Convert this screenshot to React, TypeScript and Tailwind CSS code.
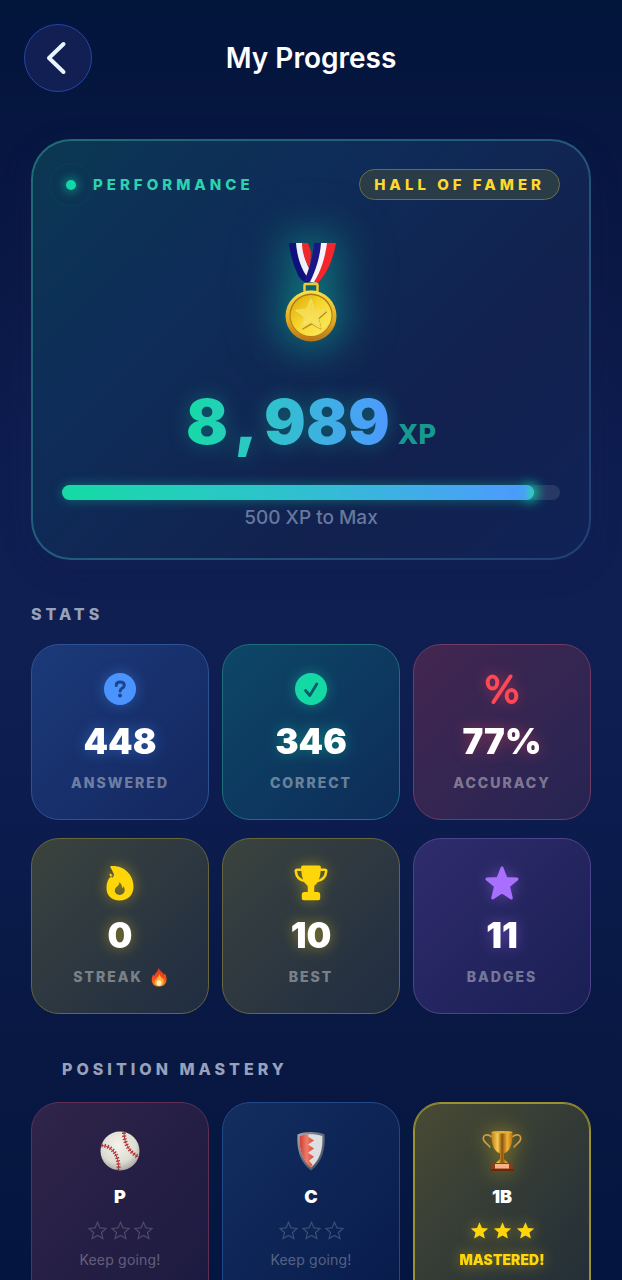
import clsx from "clsx";
import type { ReactNode } from "react";

const STAR_PATH =
  "M12 1.5l3.1 7.2 7.9.7-6 5.2 1.8 7.6-6.8-4-6.8 4L7 14.6 1 9.4l7.9-.7z";

function MedalArt() {
  return (
    <svg
      aria-hidden="true"
      viewBox="0 0 52 100"
      className="h-[100px] w-[52px] [filter:drop-shadow(0_0_20px_rgba(16,216,168,0.5))_drop-shadow(0_0_28px_rgba(16,216,168,0.25))]"
    >
      <defs>
        <linearGradient id="medal-rim" x1="0" y1="0" x2="0" y2="1">
          <stop offset="0" stopColor="#fbe04a" />
          <stop offset="0.6" stopColor="#e0a81c" />
          <stop offset="1" stopColor="#b8741a" />
        </linearGradient>
        <linearGradient id="medal-face" x1="0" y1="0" x2="1" y2="1">
          <stop offset="0" stopColor="#d9a708" />
          <stop offset="0.45" stopColor="#f6d52c" />
          <stop offset="0.8" stopColor="#fbe552" />
          <stop offset="1" stopColor="#d39d10" />
        </linearGradient>
        <linearGradient id="medal-star" x1="0" y1="0" x2="0" y2="1">
          <stop offset="0" stopColor="#f3d53a" />
          <stop offset="1" stopColor="#fae666" />
        </linearGradient>
      </defs>
      <path d="M4 1h7c2 14 6 27 14 36l-2 4c-5-1-8-4-10-8C8 22 5 12 4 1z" fill="#10107c" />
      <path d="M11 1h7c0 10 3 21 8 29l-2 7C16 28 12 14 11 1z" fill="#f1f1f5" />
      <path d="M17 1h6l3 9-1 17c-5-8-8-17-8-26z" fill="#f0282d" />
      <path d="M29 1h9c-1 13-5 28-10 39l-9-1c5-11 9-24 10-38z" fill="#1a1688" />
      <path d="M36 1h8c-2 15-7 29-12 40l-7-1c6-12 10-25 11-39z" fill="#f5f5f8" />
      <path d="M42 1h9c-3 17-9 30-18 40l-4-1c7-11 11-24 13-39z" fill="#f3262c" />
      <rect x="19.5" y="42" width="13" height="8" rx="1" fill="none" stroke="#efcb2d" strokeWidth="2.5" />
      <circle cx="26" cy="74" r="25.5" fill="url(#medal-rim)" />
      <circle cx="26" cy="73" r="21.5" fill="#a97713" />
      <circle cx="26" cy="73.5" r="20.5" fill="url(#medal-face)" />
      <path
        d="M26.800 60l4 9.200 10 .9-7.600 6.600 2.300 9.800-8.700-5.200-8.700 5.200 2.300-9.800-7.600-6.600 10-.9z"
        fill="#b98a12"
        stroke="#b98a12"
        strokeWidth="2"
        strokeLinejoin="round"
      />
      <path
        d="M26 58l4.200 9.600 10.500.9-8 6.900 2.400 10.300-9.100-5.500-9.100 5.500 2.400-10.300-8-6.900 10.500-.9z"
        fill="url(#medal-star)"
        stroke="#f3da58"
        strokeWidth="2"
        strokeLinejoin="round"
      />
    </svg>
  );
}

function QuestionIcon() {
  return (
    <svg aria-hidden="true" viewBox="0 0 32 32" className="size-8">
      <circle cx="16" cy="16" r="16" fill="#4b94ff" />
      <path
        d="M12.2 12.6c0-2.4 1.6-3.6 4-3.6 2.300 0 4.100 1.200 4.100 3.200 0 1.600-.9 2.300-2.200 3.100-1.300.8-1.900 1.300-1.900 2.600"
        fill="none"
        stroke="#1c458c"
        strokeWidth="3"
        strokeLinecap="round"
      />
      <circle cx="16" cy="22.600" r="2" fill="#1c458c" />
    </svg>
  );
}

function CheckIcon() {
  return (
    <svg aria-hidden="true" viewBox="0 0 32 32" className="size-8">
      <circle cx="16" cy="16" r="16" fill="#14d9a5" />
      <path
        d="M10.500 17.500l4.300 5 7-11.500"
        fill="none"
        stroke="#0b5a68"
        strokeWidth="2.800"
        strokeLinecap="round"
        strokeLinejoin="round"
      />
    </svg>
  );
}

function PercentIcon() {
  return (
    <svg
      aria-hidden="true"
      viewBox="0 0 34 32"
      className="h-8 w-[34px]"
      fill="none"
      stroke="#ff4757"
      strokeLinecap="round"
      strokeWidth="4"
    >
      <ellipse cx="7.500" cy="9.500" rx="4.800" ry="6" />
      <ellipse cx="26.500" cy="23" rx="4.800" ry="6" />
      <path d="M25.500 3.500l-17 25.500" />
    </svg>
  );
}

function FlameIcon() {
  return (
    <svg aria-hidden="true" viewBox="0 0 28 35" className="h-[35px] w-7">
      <path
        fill="#ffd60a"
        fillRule="evenodd"
        d="M4.600 1.800C4 .8 4.500.2 5.600.1 17-.7 27.500 8 27.500 20.500c0 8.600-5.500 14-14 14C5.500 34.500.5 29.600.5 22c0-5 1.400-8.800 4.900-12.600.4.900.6 1.900.8 2.700.9-.9 1.600-1.900 2-3C7.500 6.800 6 4.300 4.600 1.800zM3.500 7.500c1.400.4 2.300 1 3 1.900L4.500 12c-.4-1.500-.7-3-1-4.500zM13.300 16.200c-.1 2.300-1 3.400-2.200 4.300-1 .8-2.300 2.200-2.300 4 0 2.700 2.300 4.400 5 4.400s4.900-1.900 4.900-4.800c0-1.600-.6-2.900-1.400-3.800-.3 1-.7 1.500-1.300 1.900.2-2.700-.7-4.800-2.700-6z"
      />
    </svg>
  );
}

function TrophyIcon() {
  return (
    <svg aria-hidden="true" viewBox="0 0 34 36" className="h-9 w-[34px]">
      <path
        d="M8.500 4.800H3.200c-1 0-1.500.6-1.400 1.500.5 5.500 4.200 9.200 10 10M25.500 4.800h5.300c1 0 1.500.6 1.400 1.500-.5 5.500-4.200 9.200-10 10"
        fill="none"
        stroke="#ffd60a"
        strokeWidth="2.600"
      />
      <path
        d="M9 .5h16c1.300 0 2 .7 1.900 2-.4 8-1.600 13.400-4.700 16.600-1.300 1.300-2 1.800-2 3.200V27h3.300c1.700 0 2.700 1 2.700 2.700v3.500c0 1.300-.7 2-2 2H9.800c-1.300 0-2-.7-2-2v-3.500c0-1.700 1-2.700 2.700-2.700h3.300v-4.700c0-1.400-.7-1.900-2-3.200C8.700 15.900 7.500 10.500 7.100 2.500 7 1.200 7.700.5 9 .5z"
        fill="#ffd60a"
      />
    </svg>
  );
}

function BadgeStarIcon() {
  return (
    <svg aria-hidden="true" viewBox="0 0 36 36" className="size-9">
      <path
        d="M18 3l4 10.500 11 .5-8.600 7.200L27.300 33 18 26.800 8.700 33l2.900-11.800L3 14l11-.5z"
        fill="#a970ff"
        stroke="#a970ff"
        strokeWidth="3"
        strokeLinejoin="round"
      />
    </svg>
  );
}

function FireEmoji() {
  return (
    <svg role="img" aria-label="fire" viewBox="0 0 16 20" className="h-5 w-4">
      <defs>
        <linearGradient id="fire-outer" x1="0" y1="0" x2="0" y2="1">
          <stop offset="0" stopColor="#d63a18" />
          <stop offset="0.6" stopColor="#f4511e" />
          <stop offset="1" stopColor="#ff8a1e" />
        </linearGradient>
      </defs>
      <path
        d="M7.500 1C9 4 12 5 13 8c.5-.6.6-1.200.6-2 2 3 2.400 6 1.700 8.500C14.500 17.500 12 19.500 8 19.500S1.500 17.500.9 14.500C.4 12 1 9 2.500 7c0 1 .3 1.700.9 2.200C3.500 6 7 5 7.500 1z"
        fill="url(#fire-outer)"
      />
      <path
        d="M8.200 7c.4 2 2.400 3 2.900 5 .4-.3.6-.6.8-1 1 2 1 4 .2 5.500-.8 1.600-2.200 2.400-4.100 2.400s-3.500-1-4.100-2.600C3.400 14.800 3.600 13 4.500 12c.1.600.4 1 .8 1.200C5.300 11 8 10 8.200 7z"
        fill="#ffb13b"
      />
      <ellipse cx="8" cy="16" rx="2.400" ry="2.800" fill="#fff0ba" />
    </svg>
  );
}

function BaseballArt() {
  return (
    <svg aria-hidden="true" viewBox="0 0 40 40" className="size-10">
      <defs>
        <radialGradient id="ball" cx="0.45" cy="0.35" r="0.65">
          <stop offset="0" stopColor="#f4f2ea" />
          <stop offset="0.7" stopColor="#dddcd2" />
          <stop offset="1" stopColor="#a9aaa5" />
        </radialGradient>
      </defs>
      <circle cx="20" cy="20" r="19.500" fill="url(#ball)" />
      <g fill="none" stroke="#b5353a">
        <path d="M1 14.500c10 0 18.500 9 17.500 24.500M24 1c0 11 5 20 14.500 25" strokeWidth="1" />
        <path
          d="M1.500 14.500c10 0 18 9 17 24.500M24 1.500c0 10.500 5 19.500 14.500 24.500"
          strokeWidth="4"
          strokeDasharray="1.300 1.700"
        />
      </g>
    </svg>
  );
}

function ShieldArt() {
  return (
    <svg aria-hidden="true" viewBox="0 0 30 40" className="h-10 w-[30px]">
      <defs>
        <linearGradient id="shield-rim" x1="0" y1="0" x2="1" y2="1">
          <stop offset="0" stopColor="#a9adb5" />
          <stop offset="0.4" stopColor="#71767f" />
          <stop offset="1" stopColor="#454b57" />
        </linearGradient>
        <linearGradient id="shield-red" x1="0" y1="0" x2="1" y2="0">
          <stop offset="0" stopColor="#c83f35" />
          <stop offset="0.5" stopColor="#f07b66" />
          <stop offset="1" stopColor="#d94a3a" />
        </linearGradient>
      </defs>
      <path d="M1.500 3.500C10 .3 20 .3 28.500 3.500 29.500 19 26 31 15 39.500 4 31 .5 19 1.500 3.500z" fill="url(#shield-rim)" />
      <path d="M3.700 5C11 2.600 19 2.600 26.300 5 27 18.500 24 29 15 36.500 6 29 3 18.500 3.700 5z" fill="#dcdee2" />
      <path
        d="M3.700 5c3.300-1 6.500-1.600 8.800-1.700L12 5.500l6 4-6 4 6 4-6 4.200 6 4-5 4 3.500 4-1.500 2.800C6 29 3 18.500 3.700 5z"
        fill="url(#shield-red)"
      />
    </svg>
  );
}

function GoldCupArt() {
  return (
    <svg
      aria-hidden="true"
      viewBox="0 0 40 42"
      className="h-[42px] w-10 [filter:drop-shadow(0_0_10px_rgba(255,214,10,0.45))]"
    >
      <defs>
        <linearGradient id="cup" x1="0" y1="0" x2="1" y2="0">
          <stop offset="0" stopColor="#c07d18" />
          <stop offset="0.3" stopColor="#f5cb52" />
          <stop offset="0.5" stopColor="#8d510c" />
          <stop offset="0.75" stopColor="#f0b436" />
          <stop offset="1" stopColor="#b56f12" />
        </linearGradient>
      </defs>
      <path
        d="M10 7C5 3 .5 5 1.500 9.500 2.500 14 7 14 8 17.500M30 7c5-4 9.500-2 8.500 2.500-1 4.500-5.500 4.500-6.500 8"
        fill="none"
        stroke="#cf9c42"
        strokeWidth="1.700"
      />
      <path d="M9.500 2h21c.5 10-1.500 19-8.500 21.500V29l4 4H14l4-4v-5.500C11 21 9 12 9.500 2z" fill="url(#cup)" />
      <ellipse cx="20" cy="2.200" rx="10.500" ry="1.300" fill="#e5b040" />
      <path d="M10 33h20l1.500 8h-23z" fill="#8e3a17" />
      <rect x="13" y="34" width="14" height="4.500" fill="#f5b38a" />
      <path d="M8.500 39h23v2h-23z" fill="#6c2711" />
    </svg>
  );
}

type Stat = {
  label: string;
  value: string;
  icon: ReactNode;
  card: string;
  glow: string;
  emoji?: ReactNode;
};

const goldCard = "border-[#66663f] from-[#3b433d] to-[#202c42]";
const goldGlow = "[filter:drop-shadow(0_0_7px_rgba(255,214,10,0.45))]";

const stats: Stat[] = [
  {
    label: "ANSWERED",
    value: "448",
    icon: <QuestionIcon />,
    card: "border-[#2f5296] from-[#1b3a79] to-[#142760]",
    glow: "[filter:drop-shadow(0_0_7px_rgba(75,148,255,0.4))]",
  },
  {
    label: "CORRECT",
    value: "346",
    icon: <CheckIcon />,
    card: "border-[#1f6e7c] from-[#0d4767] to-[#0d2c59]",
    glow: "[filter:drop-shadow(0_0_7px_rgba(16,216,168,0.4))]",
  },
  {
    label: "ACCURACY",
    value: "77%",
    icon: <PercentIcon />,
    card: "border-[#723a64] from-[#432650] to-[#252453]",
    glow: "[filter:drop-shadow(0_0_7px_rgba(255,71,87,0.4))]",
  },
  {
    label: "STREAK",
    value: "0",
    icon: <FlameIcon />,
    card: goldCard,
    glow: goldGlow,
    emoji: <FireEmoji />,
  },
  { label: "BEST", value: "10", icon: <TrophyIcon />, card: goldCard, glow: goldGlow },
  {
    label: "BADGES",
    value: "11",
    icon: <BadgeStarIcon />,
    card: "border-[#4c448b] from-[#302c6d] to-[#191f54]",
    glow: "[filter:drop-shadow(0_0_7px_rgba(169,112,255,0.4))]",
  },
];

function StatCard({ label, value, icon, card, glow, emoji }: Stat) {
  return (
    <div
      className={clsx(
        "flex h-44 flex-col items-center justify-center rounded-[28px] border bg-linear-to-br",
        card,
      )}
    >
      <div className={clsx("flex h-9 items-center", glow)}>{icon}</div>
      <p className={clsx("mt-[14px] text-[35px] leading-10 font-black text-white", glow)}>{value}</p>
      <p className="mt-3 flex h-5 items-center gap-2 text-sm font-extrabold tracking-[2px] text-white/40">
        {label}
        {emoji}
      </p>
    </div>
  );
}

type Position = {
  name: string;
  art: ReactNode;
  mastered?: boolean;
  card: string;
};

const positions: Position[] = [
  { name: "P", art: <BaseballArt />, card: "border-[#5f2f55] from-[#302449] to-[#1b1940]" },
  { name: "C", art: <ShieldArt />, card: "border-[#234888] from-[#132e60] to-[#081b4b]" },
  {
    name: "1B",
    art: <GoldCupArt />,
    mastered: true,
    card: "border-[#9b9130] ring-1 ring-[#9b9130] ring-inset from-[#484a32] to-[#202c38]",
  },
];

function PositionCard({ name, art, mastered, card }: Position) {
  return (
    <div
      className={clsx(
        "flex h-[210px] flex-col items-center rounded-[28px] border bg-linear-to-br pt-[26px]",
        card,
      )}
    >
      <div className="flex h-11 items-center">{art}</div>
      <p className="mt-3 text-lg leading-6 font-black text-white">{name}</p>
      <div
        role="img"
        aria-label={mastered ? "3 of 3 stars" : "0 of 3 stars"}
        className={clsx("mt-[9px] flex h-6 items-center gap-1", mastered && goldGlow)}
      >
        {[0, 1, 2].map((i) => (
          <svg key={i} viewBox="0 0 24 24" className="size-[19px]">
            <path
              d={STAR_PATH}
              fill={mastered ? "#ffd60a" : "none"}
              stroke={mastered ? "none" : "#ffffff"}
              strokeOpacity="0.2"
              strokeWidth="1.500"
            />
          </svg>
        ))}
      </div>
      <p
        className={clsx(
          "mt-2 text-sm leading-5",
          mastered ? "font-black text-[#ffd60a]" : "tracking-[0.2px] text-white/30",
          mastered && goldGlow,
        )}
      >
        {mastered ? "MASTERED!" : "Keep going!"}
      </p>
    </div>
  );
}

export default function App() {
  return (
    <div className="h-screen overflow-x-hidden overflow-y-auto bg-[linear-gradient(180deg,#02153b_0%,#091743_16%,#0f1e51_38%,#0f1f52_50%,#0c1c4e_63%,#081842_82%,#04163f_100%)] font-['Inter',sans-serif] text-white [scrollbar-width:none]">
      <header className="grid grid-cols-[68px_1fr_68px] items-center px-6 pt-6">
        <button
          type="button"
          aria-label="Back"
          className="flex size-[68px] items-center justify-center rounded-full border border-[#2446a6] bg-[#111f52]"
        >
          <svg viewBox="0 0 24 36" className="mr-1 h-9 w-6">
            <path
              d="M19.500 4L5 18l14.500 14"
              fill="none"
              stroke="#e8f4ff"
              strokeWidth="4"
              strokeLinecap="round"
              strokeLinejoin="round"
            />
          </svg>
        </button>
        <h1 className="text-center text-[28px] leading-9 font-semibold">My Progress</h1>
      </header>

      <main className="px-[31px] pt-[47px]">
        <section className="rounded-[40px] border-2 border-transparent px-[29px] py-7 shadow-[0_8px_32px_rgba(20,35,90,0.2)] [background:linear-gradient(135deg,#0b3852_0%,#0e2d59_30%,#12214f_70%,#102356_100%)_padding-box,linear-gradient(135deg,#1f6c74_0%,#235a7d_50%,#213f77_100%)_border-box]">
          <div className="flex h-[31px] items-center justify-between">
            <div className="flex items-center gap-[13px]">
              <span className="relative flex w-[18px] justify-center">
                <span className="size-[10px] rounded-full bg-[#10d8a8] shadow-[0_0_10px_2px_rgba(16,216,168,0.5)]" />
                <span className="absolute top-1/2 left-1/2 size-11 -translate-1/2 rounded-full border border-[#10d8a8]/5" />
              </span>
              <h2 className="text-[15px] leading-5 font-extrabold tracking-[4px] text-[#2bd2ad]">
                PERFORMANCE
              </h2>
            </div>
            <span className="flex h-full items-center rounded-full border border-[#6a7040] bg-[#2b3c49] px-[14px] text-[15px] leading-5 font-extrabold tracking-[4px] text-[#ffd92a]">
              HALL OF FAMER
            </span>
          </div>

          <div className="mt-[42px] flex justify-center">
            <MedalArt />
          </div>

          <p className="mt-11 flex items-baseline justify-center gap-2">
            <span className="bg-linear-to-r from-[#14dba5] via-[#35bcd3] to-[#4e98ff] bg-clip-text text-[62px] leading-[72px] font-black text-transparent [filter:drop-shadow(0_0_10px_rgba(16,216,168,0.3))]">
              8<span className="inline-block w-9 text-center">,</span>989
            </span>
            <span className="text-[27px] font-extrabold text-[#17998f]">XP</span>
          </p>

          <div
            role="progressbar"
            aria-label="XP progress"
            aria-valuenow={8989}
            aria-valuemax={9489}
            className="mt-[27px] h-[15px] rounded-full bg-white/10"
          >
            <div
              className="relative h-full rounded-full bg-linear-to-r from-[#14dba5] via-[#2fc0cf] to-[#4e98ff] shadow-[0_0_12px_rgba(16,216,168,0.4)]"
              style={{ width: `${(8989 / 9489) * 100}%` }}
            >
              <span className="absolute top-0 right-0 h-full w-3 rounded-r-full bg-linear-to-r from-transparent to-[#2fd0b5] shadow-[4px_0_12px_1px_rgba(16,216,168,0.8)]" />
            </div>
          </div>
          <p className="mt-[6px] text-center text-[19px] leading-6 font-medium text-[#66799d]">
            500 XP to Max
          </p>
        </section>

        <h2 className="mt-[42px] text-base leading-6 font-extrabold tracking-[4px] text-[#97a1bc]">
          STATS
        </h2>
        <div className="mt-[18px] grid grid-cols-3 gap-x-[13px] gap-y-[18px]">
          {stats.map((stat) => (
            <StatCard key={stat.label} {...stat} />
          ))}
        </div>

        <h2 className="mt-[43px] pl-[31px] text-base leading-6 font-extrabold tracking-[4px] text-[#97a1bc]">
          POSITION MASTERY
        </h2>
        <div className="mt-[21px] grid grid-cols-3 gap-x-[13px] pb-8">
          {positions.map((position) => (
            <PositionCard key={position.name} {...position} />
          ))}
        </div>
      </main>
    </div>
  );
}
